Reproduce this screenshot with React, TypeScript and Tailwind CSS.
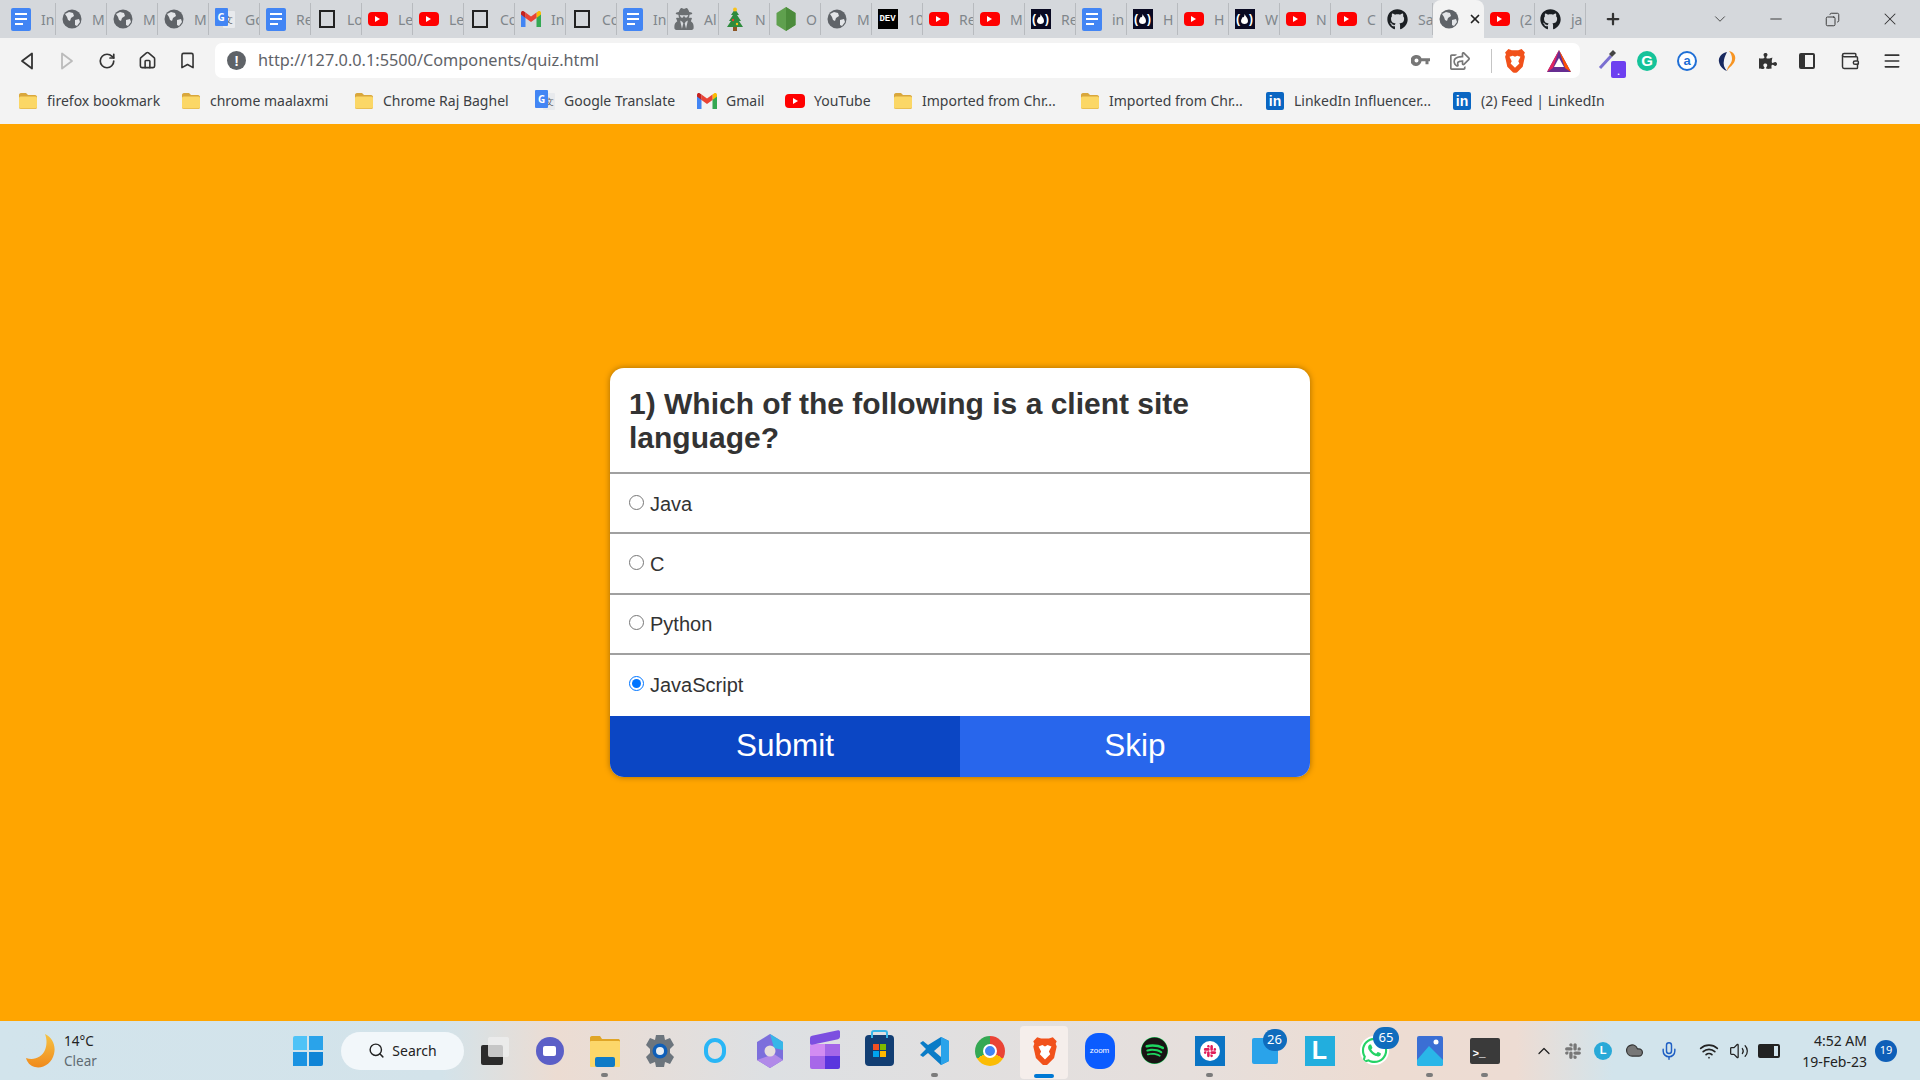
import { useState } from "react";
import { FaGithub, FaPuzzlePiece, FaRegShareSquare, FaSpotify, FaUserSecret, FaWhatsapp, FaSlack } from "react-icons/fa";
import {
  ChevronDown,
  ChevronUp,
  Cloud,
  Copy,
  Home,
  Menu,
  Mic,
  Minus,
  Plus,
  RotateCw,
  Search,
  Volume2,
  Wallet,
  Wifi,
  X,
  Bookmark,
} from "lucide-react";

type TabKind = "docs" | "globe" | "square" | "yt" | "gmail" | "translate" | "spy" | "tree" | "node" | "dev" | "fcc" | "github";

const tabs: { kind: TabKind; title: string; active?: boolean }[] = [
  { kind: "docs", title: "In" },
  { kind: "globe", title: "M" },
  { kind: "globe", title: "M" },
  { kind: "globe", title: "M" },
  { kind: "translate", title: "Go" },
  { kind: "docs", title: "Re" },
  { kind: "square", title: "Lo" },
  { kind: "yt", title: "Le" },
  { kind: "yt", title: "Le" },
  { kind: "square", title: "Co" },
  { kind: "gmail", title: "In" },
  { kind: "square", title: "Co" },
  { kind: "docs", title: "In" },
  { kind: "spy", title: "Al" },
  { kind: "tree", title: "N" },
  { kind: "node", title: "O" },
  { kind: "globe", title: "M" },
  { kind: "dev", title: "10" },
  { kind: "yt", title: "Re" },
  { kind: "yt", title: "M" },
  { kind: "fcc", title: "Re" },
  { kind: "docs", title: "in" },
  { kind: "fcc", title: "H" },
  { kind: "yt", title: "H" },
  { kind: "fcc", title: "W" },
  { kind: "yt", title: "N" },
  { kind: "yt", title: "C" },
  { kind: "github", title: "Sa" },
  { kind: "globe", title: "", active: true },
  { kind: "yt", title: "(2" },
  { kind: "github", title: "ja" },
];

function YouTubeIcon() {
  return (
    <div className="flex h-[14px] w-[20px] items-center justify-center rounded-[4px] bg-[#f00]">
      <div className="h-0 w-0 border-y-[3px] border-l-[5px] border-y-transparent border-l-white" />
    </div>
  );
}

function DocsIcon() {
  return (
    <div className="flex h-[23px] w-[20px] flex-col gap-[3px] rounded-[2px] bg-[#4285f4] px-[4px] pt-[5px]">
      <div className="h-[2px] bg-white" />
      <div className="h-[2px] bg-white" />
      <div className="h-[2px] w-[8px] bg-white" />
    </div>
  );
}

function GlobeIcon() {
  return (
    <svg width="20" height="20" viewBox="0 0 20 20">
      <circle cx="10" cy="10" r="9.5" fill="#5f6368" />
      <path d="M3 5l4-2 4 1 1 3-3 2-1 3-2-1-1-3zM13 11l4-1 1 3-3 4-2-1z" fill="#e3e5e8" />
    </svg>
  );
}

function GmailIcon() {
  return (
    <svg width="20" height="16" viewBox="0 0 20 16">
      <path d="M0 2.5V16h4.5V6z" fill="#4285f4" />
      <path d="M20 2.5V16h-4.5V6z" fill="#34a853" />
      <path d="M15.5 1.5V7l4.500-3.500V2c0-2-2-2.500-3-1.500z" fill="#fbbc04" />
      <path d="M4.500 1.500V7L10 11l5.500-4V1.500L10 5.500z" fill="#ea4335" />
      <path d="M4.500 1.500V7L0 3.500V2c0-2 2-2.500 3-1.500z" fill="#c5221f" />
    </svg>
  );
}

function TranslateIcon() {
  return (
    <div className="relative h-[22px] w-[20px]">
      <div className="absolute right-0 top-[3px] h-[17px] w-[12px] rounded-[1px] bg-[#e8eaed] text-center text-[9px] leading-[17px] text-[#5f6368]">
        文
      </div>
      <div className="absolute left-0 top-0 h-[18px] w-[13px] rounded-[1px] bg-[#4285f4] text-center text-[10px] font-bold leading-[18px] text-white">
        G
      </div>
    </div>
  );
}

function FolderIcon() {
  return (
    <svg width="20" height="18" viewBox="0 0 20 18">
      <path d="M1 3c0-1 .6-2 2-2h5l2 2h7c1.400 0 2 1 2 2v10c0 1.500-.8 2-2 2H3c-1.400 0-2-.7-2-2z" fill="#d9a73c" />
      <rect x="1" y="4.500" width="18" height="12" rx="1.500" fill="#fbd766" />
    </svg>
  );
}

function LinkedInIcon() {
  return (
    <div className="flex h-[18px] w-[18px] items-center justify-center rounded-[2px] bg-[#0a66c2] font-['Liberation_Sans',sans-serif] text-[14px] font-bold leading-none text-white">
      in
    </div>
  );
}

function FccIcon() {
  return (
    <div className="flex h-[20px] w-[20px] items-center justify-center gap-px bg-[#0a0a23] font-['Liberation_Sans',sans-serif] text-[12px] font-bold leading-none text-white">
      <span>(</span>
      <svg width="7" height="10" viewBox="0 0 7 10">
        <path d="M3.500 0C5 3 7 4 7 7c0 2-1.500 3-3.500 3S0 9 0 7c0-2 1.500-3 1.500-4C3 4 3.500 2 3.500 0z" fill="#fff" />
      </svg>
      <span>)</span>
    </div>
  );
}

function TreeIcon() {
  return (
    <svg width="20" height="24" viewBox="0 0 20 24">
      <path d="M10 2l4 6h-2l4 6h-2l4 6H2l4-6H4l4-6H6z" fill="#2e8b3d" />
      <rect x="8" y="20" width="4" height="4" fill="#8d5524" />
      <circle cx="10" cy="2.500" r="2" fill="#f9c31a" />
      <circle cx="8" cy="13" r="1.200" fill="#e8412c" />
      <circle cx="12" cy="17" r="1.200" fill="#f9c31a" />
    </svg>
  );
}

function NodeIcon() {
  return (
    <svg width="20" height="24" viewBox="0 0 20 24">
      <path d="M10 0l9.500 6v12L10 24 .5 18V6z" fill="#5fa04e" />
      <path d="M10 0l9.500 6v12L10 24z" fill="#4b8b3b" />
    </svg>
  );
}

function TabIcon({ kind }: { kind: TabKind }) {
  switch (kind) {
    case "docs":
      return <DocsIcon />;
    case "globe":
      return <GlobeIcon />;
    case "square":
      return <div className="h-[18px] w-[16px] border-[2.5px] border-[#222]" />;
    case "yt":
      return <YouTubeIcon />;
    case "gmail":
      return <GmailIcon />;
    case "translate":
      return <TranslateIcon />;
    case "spy":
      return <FaUserSecret className="h-[22px] w-[20px] text-[#6b6f72]" />;
    case "tree":
      return <TreeIcon />;
    case "node":
      return <NodeIcon />;
    case "dev":
      return (
        <div className="flex h-[20px] w-[20px] items-center justify-center bg-black font-['Liberation_Mono',monospace] text-[9px] font-bold leading-none text-white">
          DEV
        </div>
      );
    case "fcc":
      return <FccIcon />;
    case "github":
      return <FaGithub className="h-[21px] w-[21px] text-[#1b1f23]" />;
  }
}

function BraveIcon({ size = 22 }: { size?: number }) {
  return (
    <svg width={size} height={size * 1.15} viewBox="0 0 20 23">
      <path d="M4 1l3 1h6l3-1 3 3-.8 2 .8 2-2 9-5 5c-1 .8-3 .8-4 0l-5-5-2-9 .8-2-.8-2z" fill="#f1511b" />
      <path d="M5 8l3-1 2 1 2-1 3 1-2 4 1 2-4 4-4-4 1-2zM8 16l2-1 2 1-2 2z" fill="#fff" />
    </svg>
  );
}

function TabStrip() {
  return (
    <div className="flex h-[38px] items-stretch bg-[#d5d8dc] pl-[5px] font-['Noto_Sans',sans-serif] text-[14px] text-[#80868b]">
      {tabs.map((tab, i) =>
        tab.active ? (
          <div key={i} className="flex w-[51px] shrink-0 items-center gap-[9px] rounded-t-[8px] bg-[#f3f3f3] pl-[6px]">
            <TabIcon kind={tab.kind} />
            <X className="h-[14px] w-[14px] text-[#222]" strokeWidth={3} />
          </div>
        ) : (
          <div key={i} className="my-[3px] flex w-[51px] shrink-0 items-center gap-[10px] overflow-hidden border-r border-[#b8bbbf] pl-[5px]">
            <div className="flex w-[21px] shrink-0 justify-center">
              <TabIcon kind={tab.kind} />
            </div>
            <span className="whitespace-nowrap">{tab.title}</span>
          </div>
        ),
      )}
      <div className="ml-[3px] flex w-[48px] shrink-0 items-center justify-center">
        <Plus className="h-[18px] w-[18px] text-[#333]" strokeWidth={3} />
      </div>
      <div className="ml-[55px] flex w-[56px] shrink-0 items-center justify-center">
        <ChevronDown className="h-[18px] w-[18px] text-[#444]" strokeWidth={1.25} />
      </div>
      <div className="flex w-[56px] shrink-0 items-center justify-center">
        <Minus className="h-[18px] w-[18px] text-[#333]" strokeWidth={1.25} />
      </div>
      <div className="flex w-[57px] shrink-0 items-center justify-center">
        <Copy className="h-[15px] w-[15px] -scale-x-100 text-[#333]" strokeWidth={1.5} />
      </div>
      <div className="flex w-[58px] shrink-0 items-center justify-center">
        <X className="h-[20px] w-[20px] text-[#333]" strokeWidth={1.25} />
      </div>
    </div>
  );
}

function Toolbar() {
  return (
    <div className="flex h-[46px] items-start bg-[#f3f3f3] pl-[7px] pt-[5px] text-[#444]">
      <div className="flex h-[35px] w-[40px] items-center justify-center">
        <svg width="14" height="18" viewBox="0 0 14 18" fill="none" stroke="#333" strokeWidth="1.800" strokeLinejoin="round">
          <path d="M12 1.500v15L2 9z" />
        </svg>
      </div>
      <div className="flex h-[35px] w-[40px] items-center justify-center">
        <svg width="14" height="18" viewBox="0 0 14 18" fill="none" stroke="#bbb" strokeWidth="1.800" strokeLinejoin="round">
          <path d="M2 1.500v15L12 9z" />
        </svg>
      </div>
      <div className="flex h-[35px] w-[40px] items-center justify-center">
        <RotateCw className="h-[18px] w-[18px] text-[#333]" strokeWidth={2.25} />
      </div>
      <div className="flex h-[35px] w-[40px] items-center justify-center">
        <Home className="h-[19px] w-[19px] text-[#333]" strokeWidth={2} />
      </div>
      <div className="flex h-[35px] w-[40px] items-center justify-center">
        <Bookmark className="h-[19px] w-[19px] text-[#333]" strokeWidth={2} />
      </div>

      <div className="ml-[8px] flex h-[35px] w-[1365px] items-center rounded-[7px] bg-white pl-[12px]">
        <div className="flex h-[19px] w-[19px] items-center justify-center rounded-full bg-[#5f6368] font-['Liberation_Sans',sans-serif] text-[14px] font-bold leading-none text-white">
          !
        </div>
        <span className="ml-[12px] flex-1 font-['Noto_Sans',sans-serif] text-[16.3px] text-[#5f6368]">
          http://127.0.0.1:5500/Components/quiz.html
        </span>
        <div className="flex w-[40px] justify-center">
          <svg width="19" height="11" viewBox="0 0 19 11" fill="#777">
            <path d="M5.500 0a5.500 5.500 0 0 1 5 3.200H19v3h-1.500v3h-3v-3h-4a5.500 5.500 0 1 1-5-6.200zm0 3.500a2 2 0 1 0 0 4 2 2 0 0 0 0-4z" />
          </svg>
        </div>
        <div className="flex w-[40px] justify-center">
          <FaRegShareSquare className="h-[18px] w-[20px] text-[#777]" />
        </div>
        <div className="ml-[11px] h-[24px] w-px bg-[#c5c5c5]" />
        <div className="flex w-[46px] justify-center">
          <BraveIcon />
        </div>
        <div className="flex w-[42px] justify-center">
          <svg width="24" height="22" viewBox="0 0 24 22">
            <path d="M12 0l12 22H0z" fill="#662d91" />
            <path d="M12 0l12 22-6-4z" fill="#ff5000" />
            <path d="M12 0L0 22l6-4z" fill="#e0245e" />
            <path d="M12 8l5 9H7z" fill="#fff" />
          </svg>
        </div>
      </div>

      <div className="ml-[11px] flex h-[35px] w-[40px] items-center justify-center">
        <div className="relative h-[26px] w-[26px]">
          <svg width="20" height="22" viewBox="0 0 20 22" className="absolute left-0 top-0">
            <path d="M2 20l11-12" stroke="#7a6fd0" strokeWidth="3" />
            <path d="M11 6l4-4 3 3-4 4z" fill="#444" />
          </svg>
          <div className="absolute bottom-[-4px] right-[-2px] flex h-[17px] w-[15px] items-end justify-center rounded-[2px] bg-[#6d3ff0] font-['Liberation_Sans',sans-serif] text-[9px] font-bold leading-[12px] text-white">
            .
          </div>
        </div>
      </div>
      <div className="flex h-[35px] w-[32px] items-center justify-center">
        <div className="flex h-[20px] w-[20px] items-center justify-center rounded-full bg-[#15c39a] font-['Liberation_Sans',sans-serif] text-[15px] font-bold leading-none text-white">
          G
        </div>
      </div>
      <div className="flex h-[35px] w-[48px] items-center justify-center">
        <div className="flex h-[20px] w-[20px] items-center justify-center rounded-full border-2 border-[#1f6fd6] bg-white font-['Liberation_Sans',sans-serif] text-[13px] font-bold leading-none text-[#1f6fd6]">
          a
        </div>
      </div>
      <div className="flex h-[35px] w-[32px] items-center justify-center">
        <svg width="18" height="20" viewBox="0 0 18 20">
          <path d="M11 0c5 1 7 5 6 9-1 5-6 7-8 11 0-5 5-7 5-12 0-3-1-6-3-8z" fill="#f79422" />
          <path d="M9 1C4 2 0 6 1 11c1 5 5 8 8 9-3-3-4-7-3-11 .5-3 2-6 3-8z" fill="#19295f" />
        </svg>
      </div>
      <div className="flex h-[35px] w-[50px] items-center justify-center">
        <FaPuzzlePiece className="h-[18px] w-[18px] text-[#333]" />
      </div>
      <div className="flex h-[35px] w-[28px] items-center justify-center">
        <div className="h-[16px] w-[16px] rounded-[2px] border-2 border-l-[6px] border-[#333]" />
      </div>
      <div className="flex h-[35px] w-[58px] items-center justify-center">
        <Wallet className="h-[20px] w-[20px] text-[#333]" strokeWidth={1.75} />
      </div>
      <div className="flex h-[35px] w-[26px] items-center justify-center">
        <Menu className="h-[20px] w-[20px] text-[#333]" strokeWidth={2} />
      </div>
    </div>
  );
}

const bookmarks: { icon: "folder" | "translate" | "gmail" | "yt" | "in"; label: string; w: string }[] = [
  { icon: "folder", label: "firefox bookmark", w: "w-[163px]" },
  { icon: "folder", label: "chrome maalaxmi", w: "w-[173px]" },
  { icon: "folder", label: "Chrome Raj Baghel", w: "w-[181px]" },
  { icon: "translate", label: "Google Translate", w: "w-[162px]" },
  { icon: "gmail", label: "Gmail", w: "w-[88px]" },
  { icon: "yt", label: "YouTube", w: "w-[108px]" },
  { icon: "folder", label: "Imported from Chr...", w: "w-[187px]" },
  { icon: "folder", label: "Imported from Chr...", w: "w-[185px]" },
  { icon: "in", label: "LinkedIn Influencer...", w: "w-[187px]" },
  { icon: "in", label: "(2) Feed | LinkedIn", w: "w-[180px]" },
];

function BookmarksBar() {
  return (
    <div className="flex h-[40px] items-center bg-[#f3f3f3] pb-[7px] pl-[18px] font-['Noto_Sans',sans-serif] text-[14px] text-[#3c4043]">
      {bookmarks.map((b, i) => (
        <div key={i} className={`flex items-center gap-[9px] whitespace-nowrap ${b.w}`}>
          <div className="flex w-[20px] justify-center">
            {b.icon === "folder" && <FolderIcon />}
            {b.icon === "translate" && <TranslateIcon />}
            {b.icon === "gmail" && <GmailIcon />}
            {b.icon === "yt" && <YouTubeIcon />}
            {b.icon === "in" && <LinkedInIcon />}
          </div>
          <span>{b.label}</span>
        </div>
      ))}
    </div>
  );
}

const options = [
  { label: "Java", row: "h-[60px] border-b-2 border-[#a0a0a0]" },
  { label: "C", row: "h-[60.5px] border-b-2 border-[#a0a0a0]" },
  { label: "Python", row: "h-[60.5px] border-b-2 border-[#a0a0a0]" },
  { label: "JavaScript", row: "h-[61px] pb-[2px]" },
];

function QuizCard() {
  const [selected, setSelected] = useState("JavaScript");

  return (
    <div className="w-[700px] overflow-hidden rounded-[14px] bg-white font-['Liberation_Sans',Arial,sans-serif] text-[#333] shadow-[0_0_6px_rgba(0,0,0,0.35)]">
      <div className="h-[106px] border-b-2 border-[#a0a0a0] px-[19px] pt-[19px]">
        <h2 className="text-[30px] font-bold leading-[34px]">1) Which of the following is a client site language?</h2>
      </div>
      {options.map((opt) => (
        <label key={opt.label} className={`flex items-center px-[19px] pt-[1px] text-[20px] ${opt.row}`}>
          <input
            type="radio"
            name="answer"
            checked={selected === opt.label}
            onChange={() => setSelected(opt.label)}
            className="-mt-[3px] mr-[6px] h-[15px] w-[15px] accent-[#0075ff]"
          />
          {opt.label}
        </label>
      ))}
      <div className="flex h-[61px] text-[31.5px] leading-[58px] text-white">
        <button className="flex-1 bg-[#0b46c4] pb-[3px]">Submit</button>
        <button className="flex-1 bg-[#2866ec] pb-[3px]">Skip</button>
      </div>
    </div>
  );
}

function AppTile({ children, dot }: { children: React.ReactNode; dot?: boolean }) {
  return (
    <div className="relative flex h-full w-[55px] items-center justify-center">
      {children}
      {dot && <div className="absolute bottom-[3px] h-[4px] w-[7px] rounded-full bg-[#7b7b7b]" />}
    </div>
  );
}

function Taskbar() {
  return (
    <div className="flex h-[59px] items-center bg-[linear-gradient(90deg,#d2e4ec_0%,#d3e3ea_23%,#ecdcd2_29%,#dde0e3_40%,#e6dfdc_62%,#eddcd2_72%,#eddcd3_79%,#d2e4ec_84%,#d2e4ec_100%)] font-['Noto_Sans',sans-serif] text-[#222]">
      <div className="ml-[26px] flex w-[267px] items-center gap-[9px]">
        <svg width="29" height="34" viewBox="0 0 29 34">
          <defs>
            <linearGradient id="moon" x1="0" y1="0" x2="0" y2="1">
              <stop offset="0" stopColor="#f6c343" />
              <stop offset="1" stopColor="#f08a1c" />
            </linearGradient>
          </defs>
          <path d="M19 0c8 4 11 12 9 20-2 9-11 15-19 13C4 32 1 28 0 24c8 3 16-1 19-8 2-5 2-11 0-16z" fill="url(#moon)" />
        </svg>
        <div className="text-[13.500px] leading-[20px]">
          <div>14°C</div>
          <div className="text-[#5f6b72]">Clear</div>
        </div>
      </div>
      <div className="grid h-[30px] w-[30px] grid-cols-2 gap-[2px]">
        <div className="rounded-tl-[2px] bg-[#4fc3f7]" />
        <div className="bg-[#2aa3ea]" />
        <div className="bg-[#1a93e2]" />
        <div className="rounded-br-[2px] bg-[#0f84d6]" />
      </div>
      <div className="ml-[18px] flex h-[38px] w-[123px] items-center justify-center gap-[7px] rounded-full bg-[#f2f7fa] text-[14px]">
        <Search className="h-[17px] w-[17px] text-[#222]" strokeWidth={2} />
        <span>Search</span>
      </div>
      <div className="ml-[3px] flex h-full">
        <AppTile>
          <div className="relative h-[28px] w-[28px]">
            <div className="absolute bottom-0 left-0 h-[20px] w-[22px] rounded-[2px] bg-[#2b2b2b]" />
            <div className="absolute right-0 top-0 h-[20px] w-[21px] rounded-[2px] bg-[#eeeeee]/80" />
          </div>
        </AppTile>
        <AppTile>
          <div className="flex h-[28px] w-[28px] items-center justify-center rounded-full bg-[#5b5fc7]">
            <div className="h-[10px] w-[13px] rounded-[2px] bg-white" />
          </div>
        </AppTile>
        <AppTile dot>
          <svg width="30" height="32" viewBox="0 0 30 32">
            <path d="M0 3c0-1 .6-2 2-2h8l2 3h16c1 0 2 .6 2 2v3H0z" fill="#e0a526" />
            <rect y="6" width="30" height="26" rx="1" fill="#fcd76a" />
            <rect x="5" y="22" width="20" height="10" rx="2" fill="#0f7bc7" />
          </svg>
        </AppTile>
        <AppTile>
          <svg width="30" height="34" viewBox="0 0 30 34">
            <path d="M11 1h8l1 5 5-2 4 7-4 4v4l4 4-4 7-5-2-1 5h-8l-1-5-5 2-4-7 4-4v-4L1 11l4-7 5 2z" fill="#6c757d" />
            <circle cx="15" cy="17" r="7.500" fill="#0f5fb8" />
            <circle cx="15" cy="17" r="4" fill="#e8eef3" />
          </svg>
        </AppTile>
        <AppTile>
          <div className="h-[25px] w-[22px] rounded-full border-[4px] border-[#29b6f6]" />
        </AppTile>
        <AppTile>
          <svg width="28" height="34" viewBox="0 0 28 34">
            <path d="M14 0l13 8v18l-13 8-13-8V8z" fill="#7c6fdc" />
            <path d="M14 0l13 8v8l-9-2z" fill="#36b6e8" />
            <path d="M1 26l13 8 13-8-9-6z" fill="#b18ae8" />
            <circle cx="14" cy="17" r="5.500" fill="#e6dfdc" />
          </svg>
        </AppTile>
        <AppTile>
          <div className="flex flex-col">
            <div className="mb-[2px] h-[9px] w-[30px] -skew-y-[12deg] rounded-[2px] bg-[#7c4fe0]" />
            <div className="grid h-[25px] w-[30px] grid-cols-2">
              <div className="rounded-tl-[2px] bg-[#d28cf2]" />
              <div className="bg-[#a466e8]" />
              <div className="rounded-bl-[2px] bg-[#a767e9]" />
              <div className="rounded-br-[2px] bg-[#5a35de]" />
            </div>
          </div>
        </AppTile>
        <AppTile>
          <div className="relative flex h-[31px] w-[29px] items-center justify-center rounded-[4px] bg-[#123e73]">
            <div className="absolute -top-[5px] h-[8px] w-[17px] rounded-t-[3px] border-2 border-b-0 border-[#36b6e8]" />
            <div className="grid h-[13px] w-[13px] grid-cols-2 gap-px">
              <div className="bg-[#f25022]" />
              <div className="bg-[#7fba00]" />
              <div className="bg-[#00a4ef]" />
              <div className="bg-[#ffb900]" />
            </div>
          </div>
        </AppTile>
        <AppTile dot>
          <svg width="30" height="30" viewBox="0 0 30 30">
            <path d="M21 1l8 4v20l-8 4-13-12-5 4-3-2 6-6-6-6 3-2 5 4z" fill="#0a7cc7" />
            <path d="M21 1l8 4v20l-8 4z" fill="#2aa3ea" />
            <path d="M21 9v12l-7-6z" fill="#e3e0df" />
          </svg>
        </AppTile>
        <AppTile>
          <div className="relative h-[30px] w-[30px] rounded-full bg-[conic-gradient(#ea4335_0deg_120deg,#fbbc04_120deg_240deg,#34a853_240deg_360deg)]">
            <div className="absolute inset-[8px] rounded-full border-2 border-white bg-[#4285f4]" />
          </div>
        </AppTile>
        <div className="relative flex h-full w-[55px] items-center justify-center">
          <div className="absolute bottom-[1px] left-[3px] top-[5px] w-[48px] rounded-[4px] bg-[#f5eeeb]" />
          <div className="relative">
            <BraveIcon size={26} />
          </div>
          <div className="absolute bottom-[2px] left-[17px] h-[4px] w-[20px] rounded-full bg-[#0078d4]" />
        </div>
        <AppTile>
          <div className="flex h-[36px] w-[30px] items-center justify-center rounded-[13px] bg-[#0b5cff] font-['Liberation_Sans',sans-serif] text-[8px] text-white">
            zoom
          </div>
        </AppTile>
        <AppTile>
          <div className="flex h-[27px] w-[27px] items-center justify-center rounded-full bg-[#1ed760]">
            <FaSpotify className="h-[27px] w-[27px] text-[#191414]" />
          </div>
        </AppTile>
        <AppTile dot>
          <div className="flex h-[30px] w-[30px] items-center justify-center bg-[#0a74c4]">
            <div className="flex h-[20px] w-[20px] items-center justify-center rounded-full bg-white">
              <FaSlack className="h-[14px] w-[14px] text-[#e01e5a]" />
            </div>
          </div>
        </AppTile>
        <AppTile>
          <div className="relative h-[26px] w-[26px] rounded-[2px] bg-[#2aa3ea]">
            <div className="absolute -right-[9px] -top-[9px] flex h-[22px] w-[24px] items-center justify-center rounded-full bg-[#0f6cbd] text-[13px] text-white">
              26
            </div>
          </div>
        </AppTile>
        <AppTile>
          <div className="flex h-[30px] w-[30px] items-center justify-center bg-[#22aede] font-['Liberation_Sans',sans-serif] text-[25px] font-bold leading-none text-white">
            L
          </div>
        </AppTile>
        <AppTile>
          <div className="relative">
            <FaWhatsapp className="h-[29px] w-[29px] rounded-full bg-white text-[#25d366]" />
            <div className="absolute -right-[10px] -top-[9px] flex h-[22px] w-[26px] items-center justify-center rounded-full bg-[#0f6cbd] text-[13px] text-white">
              65
            </div>
          </div>
        </AppTile>
        <AppTile dot>
          <svg width="26" height="30" viewBox="0 0 26 30">
            <rect width="26" height="30" rx="2" fill="#3b6fd4" />
            <path d="M0 24l12-14 14 14v4a2 2 0 0 1-2 2H2a2 2 0 0 1-2-2z" fill="#2ab6e8" />
            <circle cx="19" cy="6" r="2.500" fill="#fff" />
          </svg>
        </AppTile>
        <AppTile dot>
          <div className="h-[26px] w-[30px] rounded-[2px] bg-[#3a3a3a] pt-[11px] font-['Liberation_Mono',monospace] text-[11px] font-bold leading-none text-white">
            <span className="pl-[3px]">&gt;_</span>
          </div>
        </AppTile>
      </div>
      <div className="ml-[14px] flex w-[35px] justify-center">
        <ChevronUp className="h-[20px] w-[20px] text-[#222]" strokeWidth={1.5} />
      </div>
      <div className="flex w-[24px] justify-center">
        <FaSlack className="h-[18px] w-[18px] text-[#777]" />
      </div>
      <div className="ml-[9px] flex h-[18px] w-[18px] items-center justify-center rounded-full bg-[#29a9d8] font-['Liberation_Sans',sans-serif] text-[11px] font-bold leading-none text-white">
        L
      </div>
      <div className="ml-[11px] flex w-[22px] justify-center">
        <Cloud className="h-[19px] w-[19px] fill-[#777] text-[#333]" strokeWidth={1.5} />
      </div>
      <div className="ml-[14px] flex w-[20px] justify-center">
        <Mic className="h-[22px] w-[22px] text-[#1f5fc4]" strokeWidth={1.75} />
      </div>
      <div className="ml-[19px] flex w-[22px] justify-center">
        <Wifi className="h-[20px] w-[20px] text-[#222]" strokeWidth={2} />
      </div>
      <div className="ml-[8px] flex w-[22px] justify-center">
        <Volume2 className="h-[20px] w-[20px] text-[#222]" strokeWidth={1.5} />
      </div>
      <div className="ml-[8px] flex h-[14px] w-[22px] items-center rounded-[2px] border-2 border-[#222]">
        <div className="h-full w-[14px] bg-[#222]" />
      </div>
      <div className="w-[87px] text-right text-[14px] leading-[21px] text-[#222]">
        <div>4:52 AM</div>
        <div>19-Feb-23</div>
      </div>
      <div className="ml-[8px] flex h-[22px] w-[22px] items-center justify-center rounded-full bg-[#0f5fb8] text-[11px] text-white">
        19
      </div>
    </div>
  );
}

export default function App() {
  return (
    <div className="flex h-screen flex-col overflow-hidden">
      <TabStrip />
      <Toolbar />
      <BookmarksBar />
      <main className="flex flex-1 items-center justify-center bg-[#ffa500]">
        <QuizCard />
      </main>
      <Taskbar />
    </div>
  );
}
